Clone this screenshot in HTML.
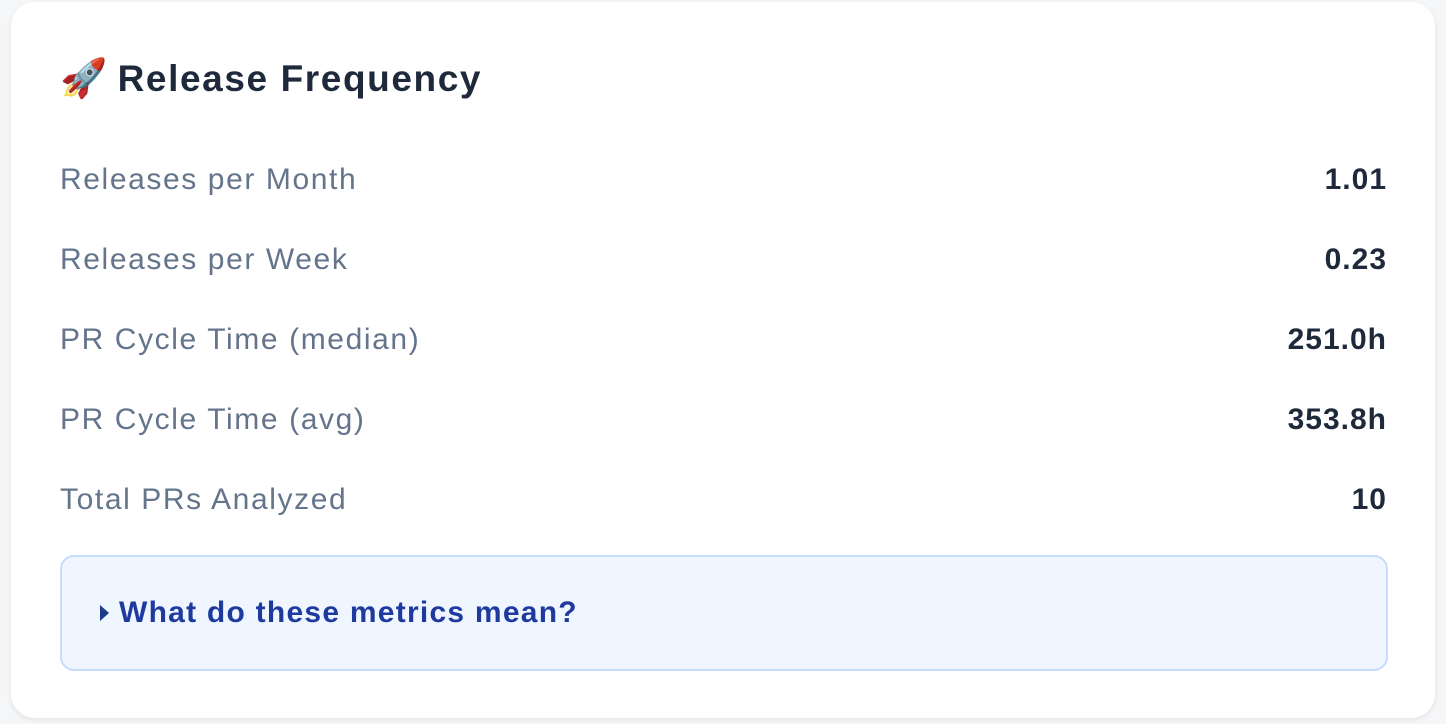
<!DOCTYPE html>
<html><head><style>
html,body{margin:0;padding:0;width:1446px;height:724px;background:#f5f6f8;overflow:hidden;font-family:"Liberation Sans",sans-serif;}
.card{position:absolute;left:11px;top:2px;width:1424px;height:716px;background:#fff;border-radius:24px;box-shadow:0 2px 6px rgba(0,0,0,0.08);}
.title{position:absolute;left:49px;top:52px;font-size:37px;font-weight:bold;color:#1e293b;line-height:50px;white-space:nowrap;}
.title b{letter-spacing:1.6px;}
.row{position:absolute;left:49px;width:1326px;height:40px;line-height:40px;font-size:30px;}
.row .l{position:absolute;left:0;color:#64748b;letter-spacing:1.6px;}
.row .v{position:absolute;right:-1px;color:#1e293b;font-weight:bold;letter-spacing:1px;}
.det{position:absolute;left:49px;top:553px;width:1324px;height:112px;background:#eff6ff;border:2px solid #c5dcfb;border-radius:14px;}
.det span{position:absolute;left:57px;top:36px;font-size:30px;font-weight:bold;color:#1e3a9f;line-height:40px;white-space:nowrap;letter-spacing:1.25px;}
.tri{position:absolute;left:38px;top:48px;width:0;height:0;border-left:9px solid #1e3a8a;border-top:8px solid transparent;border-bottom:8px solid transparent;}
</style></head><body>
<div class="card">
<div class="title"><span style="font-size:38px">🚀</span> <b>Release Frequency</b></div>
<div class="row" style="top:158px"><span class="l">Releases per Month</span><span class="v">1.01</span></div>
<div class="row" style="top:238px"><span class="l">Releases per Week</span><span class="v">0.23</span></div>
<div class="row" style="top:318px"><span class="l">PR Cycle Time (median)</span><span class="v">251.0h</span></div>
<div class="row" style="top:398px"><span class="l">PR Cycle Time (avg)</span><span class="v">353.8h</span></div>
<div class="row" style="top:478px"><span class="l">Total PRs Analyzed</span><span class="v">10</span></div>
<div class="det"><div class="tri"></div><span>What do these metrics mean?</span></div>
</div>
</body></html>
